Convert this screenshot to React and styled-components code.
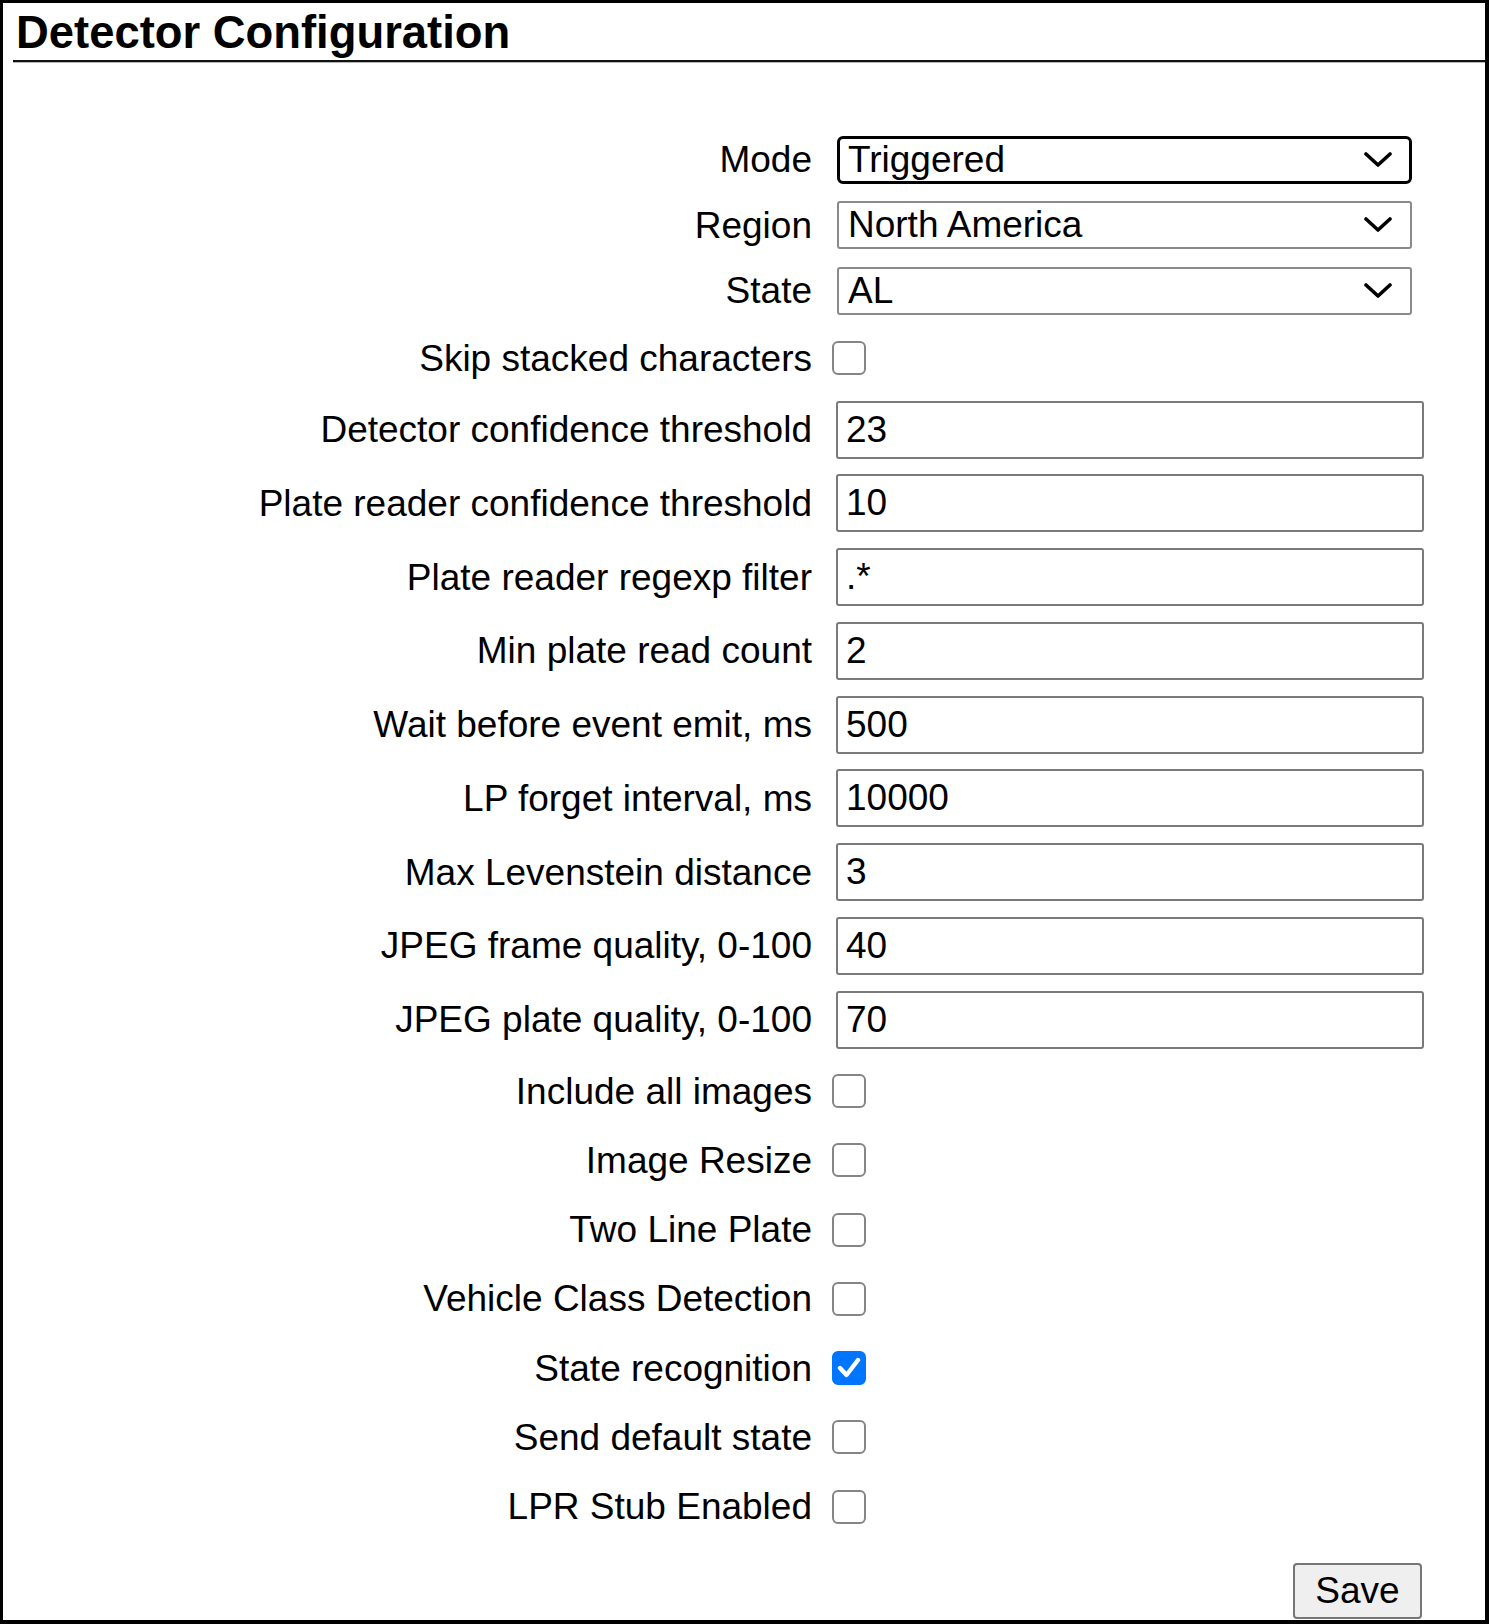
import React from "react"
import styled, { createGlobalStyle, css } from "styled-components"

const GlobalStyle = createGlobalStyle`
  html, body {
    margin: 0;
    padding: 0;
    background: #fff;
  }
  body {
    font-family: "Liberation Sans", Arial, sans-serif;
    color: #000;
  }
`

const Frame = styled.div`
  box-sizing: border-box;
  width: 1489px;
  height: 1624px;
  border: 3px solid #000;
  border-right-width: 4px;
  border-bottom-width: 4px;
  background: #fff;
  display: flex;
  flex-direction: column;
`

const Heading = styled.h2`
  margin: 4px 0 0 10px;
  padding: 0 0 1px 3px;
  font-size: 45.4px;
  line-height: 52px;
  font-weight: bold;
  border-bottom: 2px solid #111;
  box-shadow: 0 1px 0 #b5b5b5;
`

const Form = styled.form`
  display: flex;
  flex-direction: column;
  padding-top: 65px;
`

const rowHeights = {
  select: 65.5,
  check: 69.25,
  text: 73.75,
}

const Row = styled.div`
  display: grid;
  grid-template-columns: 809px 1fr;
  column-gap: 24px;
  align-items: center;
  height: ${p => rowHeights[p.$kind]}px;
`

const Label = styled.label`
  justify-self: end;
  font-size: 37px;
  line-height: 1;
  white-space: nowrap;
`

const SelectBox = styled.div`
  box-sizing: border-box;
  width: 575px;
  height: 48px;
  margin-left: 1px;
  display: flex;
  align-items: center;
  justify-content: space-between;
  padding: 0 18px 0 9px;
  font-size: 37px;
  border: 2px solid #8a8a8a;
  border-radius: 3px;
  ${p => p.$focused && css`
    border: 3px solid #000;
    border-radius: 6px;
    padding-left: 8px;
    padding-right: 17px;
  `}
`

const TextInput = styled.input`
  box-sizing: border-box;
  width: 588px;
  height: 58px;
  margin: 0;
  padding: 0 8px;
  font-family: "Liberation Sans", Arial, sans-serif;
  font-size: 37px;
  color: #000;
  border: 2px solid #7a7a7a;
  border-radius: 3px;
  background: #fff;
  outline: none;
`

const CheckBox = styled.span`
  box-sizing: border-box;
  width: 34px;
  height: 34px;
  margin-left: -4px;
  display: flex;
  align-items: center;
  justify-content: center;
  border: 2px solid #858585;
  border-radius: 6px;
  background: #fff;
  ${p => p.$checked && css`
    border-color: #0075ff;
    background: #0075ff;
  `}
`

const ButtonRow = styled.div`
  display: flex;
  justify-content: flex-end;
  padding-right: 63px;
  margin-top: 22px;
`

const SaveButton = styled.button`
  box-sizing: border-box;
  width: 129px;
  height: 56px;
  font-family: "Liberation Sans", Arial, sans-serif;
  font-size: 37px;
  color: #000;
  background: #efefef;
  border: 2px solid #767676;
  border-radius: 4px;
  padding: 0;
`

const Chevron = () => (
  <svg width="28" height="16" viewBox="0 0 28 16">
    <polyline points="2,2 14,13 26,2" fill="none" stroke="#000" strokeWidth="3.6" strokeLinecap="round" strokeLinejoin="round" />
  </svg>
)

const Tick = () => (
  <svg width="24" height="22" viewBox="0 0 24 22">
    <polyline points="3,11 9.5,18 21,3" fill="none" stroke="#fff" strokeWidth="4.4" strokeLinecap="round" strokeLinejoin="round" />
  </svg>
)

const fields = [
  { kind: "select", label: "Mode", value: "Triggered", focused: true },
  { kind: "select", label: "Region", value: "North America" },
  { kind: "select", label: "State", value: "AL" },
  { kind: "check", label: "Skip stacked characters" },
  { kind: "text", label: "Detector confidence threshold", value: "23" },
  { kind: "text", label: "Plate reader confidence threshold", value: "10" },
  { kind: "text", label: "Plate reader regexp filter", value: ".*" },
  { kind: "text", label: "Min plate read count", value: "2" },
  { kind: "text", label: "Wait before event emit, ms", value: "500" },
  { kind: "text", label: "LP forget interval, ms", value: "10000" },
  { kind: "text", label: "Max Levenstein distance", value: "3" },
  { kind: "text", label: "JPEG frame quality, 0-100", value: "40" },
  { kind: "text", label: "JPEG plate quality, 0-100", value: "70" },
  { kind: "check", label: "Include all images" },
  { kind: "check", label: "Image Resize" },
  { kind: "check", label: "Two Line Plate" },
  { kind: "check", label: "Vehicle Class Detection" },
  { kind: "check", label: "State recognition", checked: true },
  { kind: "check", label: "Send default state" },
  { kind: "check", label: "LPR Stub Enabled" },
]

const Control = ({ field }) => {
  if (field.kind === "select") {
    return (
      <SelectBox $focused={field.focused}>
        <span>{field.value}</span>
        <Chevron />
      </SelectBox>
    )
  }
  if (field.kind === "check") {
    return <CheckBox $checked={field.checked}>{field.checked && <Tick />}</CheckBox>
  }
  return <TextInput type="text" defaultValue={field.value} />
}

const App = () => (
  <>
    <GlobalStyle />
    <Frame>
      <Heading>Detector Configuration</Heading>
      <Form onSubmit={e => e.preventDefault()}>
        {fields.map(field => (
          <Row key={field.label} $kind={field.kind}>
            <Label>{field.label}</Label>
            <Control field={field} />
          </Row>
        ))}
        <ButtonRow>
          <SaveButton type="submit">Save</SaveButton>
        </ButtonRow>
      </Form>
    </Frame>
  </>
)

export default App
